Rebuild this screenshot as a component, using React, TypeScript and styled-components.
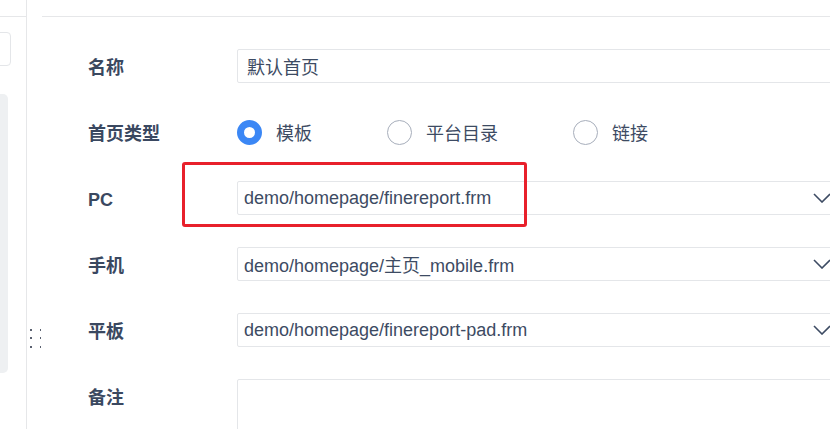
import React from "react";
import styled, { createGlobalStyle } from "styled-components";

const GlobalStyle = createGlobalStyle`
  html, body {
    margin: 0;
    padding: 0;
    background: #ffffff;
    overflow: hidden;
  }
  body {
    font-family: "Liberation Sans", "Noto Sans CJK SC", sans-serif;
  }
`;

const Page = styled.div`
  position: relative;
  display: flex;
  width: 830px;
  height: 429px;
  overflow: hidden;
`;

const Sidebar = styled.aside`
  width: 26px;
  flex: none;
  border-right: 1px solid #e6e7e9;
  display: flex;
  flex-direction: column;
`;

const SidebarHead = styled.div`
  flex: none;
  height: 16px;
  border-bottom: 1px solid #e6e7e9;
`;

const SearchStub = styled.div`
  flex: none;
  margin: 15px 0 0 -12px;
  width: 21px;
  height: 32px;
  border: 1px solid #e4e6e9;
  border-radius: 4px;
`;

const ScrollTrack = styled.div`
  flex: none;
  margin: 28px 0 0 -10px;
  width: 18px;
  height: 279px;
  background: #eef0f2;
  border-radius: 5px;
`;

const Handle = styled.div`
  width: 15px;
  flex: none;
  display: flex;
  justify-content: center;
  align-items: flex-start;
  padding-top: 328px;
`;

const Main = styled.main`
  flex: 1;
  min-width: 0;
  display: flex;
  flex-direction: column;
`;

const MainHead = styled.div`
  flex: none;
  height: 16px;
  border-bottom: 1px solid #e6e7e9;
`;

const Form = styled.div`
  flex: none;
  display: flex;
  flex-direction: column;
  gap: 32px;
  padding: 32px 0 0 46px;
  margin-right: -12px;
`;

const Row = styled.div<{ $top?: boolean }>`
  display: grid;
  grid-template-columns: 149px 1fr;
  align-items: ${(p) => (p.$top ? "start" : "center")};
  min-height: 34px;
`;

const Label = styled.div`
  box-sizing: border-box;
  height: 34px;
  padding-top: 4px;
  font-family: "Liberation Sans", "Noto Sans CJK SC", sans-serif;
  font-weight: 700;
  font-size: 18px;
  line-height: 30px;
  color: #3a4860;
`;

const Field = styled.div<{ $tall?: boolean }>`
  box-sizing: border-box;
  height: ${(p) => (p.$tall ? "100px" : "34px")};
  border: 1px solid #e4e6e9;
  border-radius: 2px;
  padding: 0 10px 0 6px;
  display: flex;
  align-items: center;
  justify-content: space-between;
  font-size: 18px;
  color: #3d4b63;
`;

const Value = styled.span`
  font-family: "Liberation Sans", "Noto Sans CJK SC", sans-serif;
  white-space: nowrap;
`;

const CnValue = styled(Value)`
  padding-left: 3px;
  font-family: "Noto Sans CJK SC", sans-serif;
`;

const RadioGroup = styled.div`
  display: flex;
  align-items: center;
  gap: 75px;
  height: 34px;
`;

const RadioItem = styled.label`
  display: flex;
  align-items: center;
  gap: 14px;
  font-family: "Noto Sans CJK SC", sans-serif;
  font-size: 18px;
  color: #3d4b63;
`;

const RadioDot = styled.span<{ $checked?: boolean }>`
  box-sizing: border-box;
  width: 25px;
  height: 25px;
  border-radius: 50%;
  background: #ffffff;
  border: ${(p) => (p.$checked ? "7px solid #3b87f5" : "1.5px solid #a7aebb")};
`;

const Marker = styled.div`
  position: absolute;
  left: 182px;
  top: 162px;
  width: 345px;
  height: 65px;
  box-sizing: border-box;
  border: 3px solid #e8202b;
  border-radius: 3px;
  pointer-events: none;
`;

const Chevron = () => (
  <svg width="18" height="10" viewBox="0 0 18 10">
    <polyline
      points="1,1 9,9 17,1"
      fill="none"
      stroke="#3d4b63"
      strokeWidth="1.6"
    />
  </svg>
);

const Dots = () => (
  <svg width="12" height="20" viewBox="0 0 12 20">
    {[1, 9, 18].map((y) =>
      [1, 11].map((x) => (
        <rect key={`${x}-${y}`} x={x} y={y} width="2" height="2" fill="#5a6170" />
      ))
    )}
  </svg>
);

const templates = [
  { label: "PC", value: "demo/homepage/finereport.frm" },
  { label: "手机", value: "demo/homepage/主页_mobile.frm" },
  { label: "平板", value: "demo/homepage/finereport-pad.frm" },
];

const types = [
  { text: "模板", checked: true },
  { text: "平台目录" },
  { text: "链接" },
];

export default function App() {
  return (
    <>
      <GlobalStyle />
      <Page>
        <Sidebar>
          <SidebarHead />
          <SearchStub />
          <ScrollTrack />
        </Sidebar>
        <Handle>
          <Dots />
        </Handle>
        <Main>
          <MainHead />
          <Form>
            <Row>
              <Label>名称</Label>
              <Field>
                <CnValue>默认首页</CnValue>
              </Field>
            </Row>
            <Row>
              <Label>首页类型</Label>
              <RadioGroup>
                {types.map((t) => (
                  <RadioItem key={t.text}>
                    <RadioDot $checked={t.checked} />
                    {t.text}
                  </RadioItem>
                ))}
              </RadioGroup>
            </Row>
            {templates.map((t) => (
              <Row key={t.label}>
                <Label>{t.label}</Label>
                <Field>
                  <Value>{t.value}</Value>
                  <Chevron />
                </Field>
              </Row>
            ))}
            <Row $top>
              <Label>备注</Label>
              <Field $tall />
            </Row>
          </Form>
        </Main>
        <Marker />
      </Page>
    </>
  );
}
